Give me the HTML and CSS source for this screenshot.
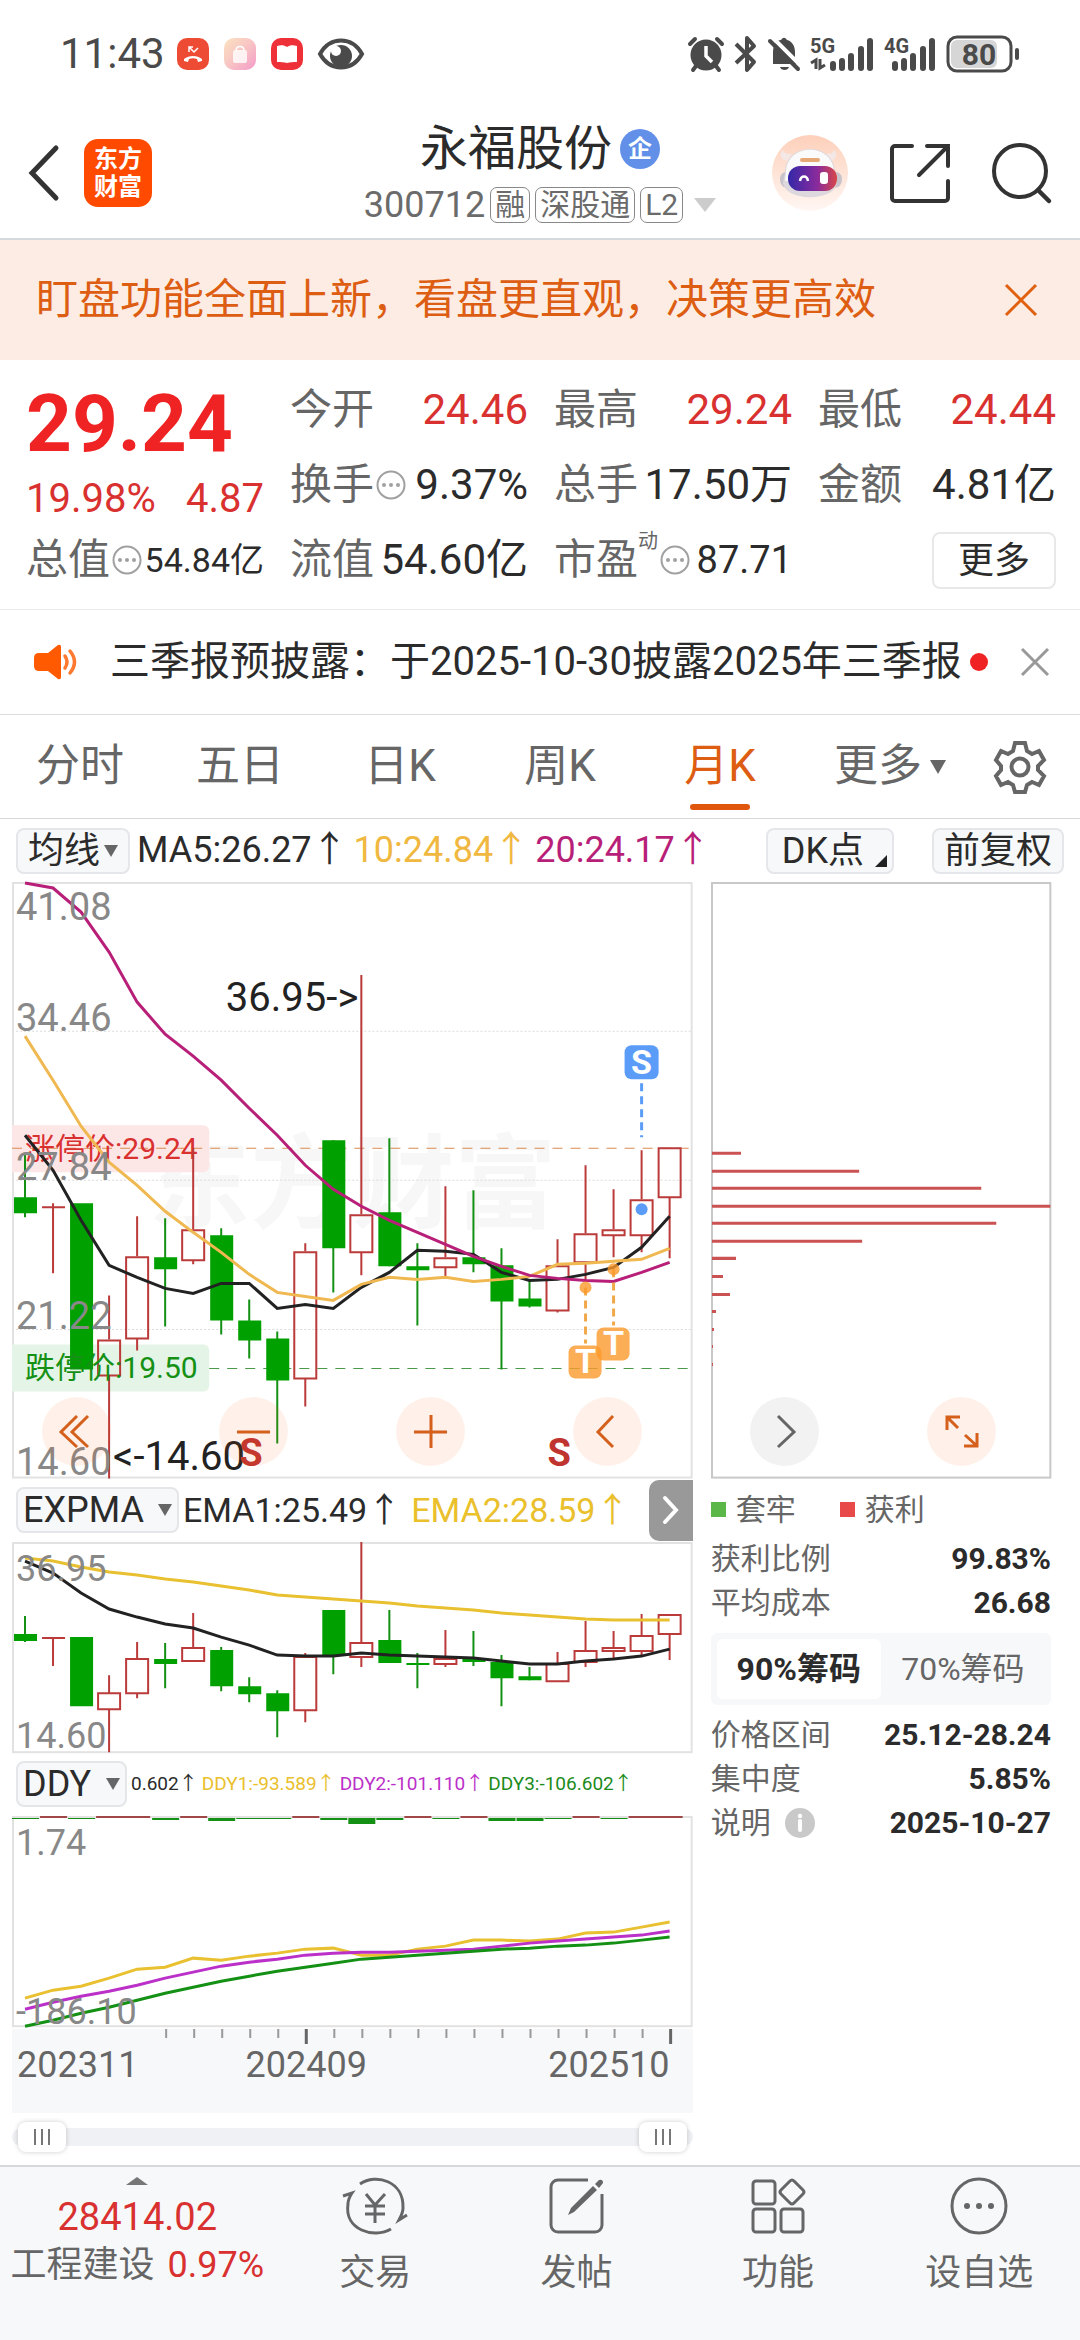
FILE: index.html
```html
<!DOCTYPE html>
<html lang="zh-CN">
<head>
    <meta charset="UTF-8">
    <meta name="viewport" content="width=device-width, initial-scale=1.0">
    <title>永福股份 300712</title>
    <link rel="stylesheet" href="styles.css">
</head>
<body>

    <div class="status">
        <span class="time">11:43</span>
        <svg class="app" width="32" height="32" viewBox="0 0 32 32"><rect width="32" height="32" rx="10" fill="#ee4b35"/><path d="M7 23v-2c5-4 13-4 18 0v2l-4 1-1-3c-3-1-5-1-8 0l-1 3z" fill="#fff"/><path d="M12 14V9h4M12 9l5 5 4-4" fill="none" stroke="#fff" stroke-width="1.5"/></svg>
        <svg class="app" width="32" height="32" viewBox="0 0 32 32"><defs><linearGradient id="bag" x1="0" y1="0" x2="1" y2="1"><stop offset="0" stop-color="#fbe3c0"/><stop offset=".5" stop-color="#f8c4c4"/><stop offset="1" stop-color="#f49ac8"/></linearGradient></defs><rect width="32" height="32" rx="10" fill="url(#bag)"/><rect x="9" y="12" width="14" height="13" rx="2" fill="#fff" opacity=".8"/><path d="M12 13c0-6 8-6 8 0" fill="none" stroke="#fff" stroke-width="1.5"/></svg>
        <svg class="app" width="32" height="32" viewBox="0 0 32 32"><rect width="32" height="32" rx="10" fill="#ee3039"/><path d="M6 8c4-1 7-1 10 1 3-2 6-2 10-1v16c-4 0-7 0-10 1-3-1-6-1-10-1z" fill="#fff"/></svg>
        <svg width="46" height="32" viewBox="0 0 46 32"><path d="M2 16C12-2 34-2 44 16 34 34 12 34 2 16z" fill="none" stroke="#4a4a4a" stroke-width="4"/><circle cx="23" cy="18" r="11" fill="#4a4a4a"/><circle cx="18" cy="13" r="5" fill="#fff"/></svg>
        <span class="grow"></span>
        <svg width="36" height="36" viewBox="0 0 36 36"><g stroke="#4a4a4a" stroke-width="4" stroke-linecap="round"><path d="M2 8l5-5M34 8l-5-5M8 30l-3 4M28 30l3 4"/></g><circle cx="18" cy="19" r="15.500" fill="#4a4a4a"/><path d="M18 10v10l6 6" fill="none" stroke="#fff" stroke-width="3.500"/></svg>
        <svg width="24" height="36" viewBox="0 0 24 36"><path d="M2 8l18 18-7 8V2l7 8L2 27" fill="none" stroke="#4a4a4a" stroke-width="4" stroke-linejoin="round"/></svg>
        <svg width="32" height="36" viewBox="0 0 32 36"><path d="M5 28V17C5 8 9 4 13 4c2-3 4-3 6 0 5 1 8 6 8 12v7l3 5zM12 31h9c-1 4-8 4-9 0z" fill="#4a4a4a"/><path d="M4 1l28 28" stroke="#fff" stroke-width="4"/><path d="M2 5l28 28" stroke="#4a4a4a" stroke-width="4" stroke-linecap="round"/></svg>
        <svg width="64" height="36" viewBox="0 0 64 36"><text class="net" x="0" y="17">5G</text><path d="M1 27l5-3v9M10 23v9l5-3" fill="none" stroke="#4a4a4a" stroke-width="3"/><path class="bars" d="M23 28v4M32 25v7M41 20v12M51 13v19M60 5v27"/></svg>
        <svg width="52" height="36" viewBox="0 0 52 36"><text class="net" x="0" y="17">4G</text><path class="bars" d="M11 28v4M20 25v7M29 20v12M39 13v19M48 5v27"/></svg>
        <svg width="74" height="38" viewBox="0 0 74 38"><rect x="5" y="5" width="46" height="28" rx="6" fill="#d6d6d6"/><rect x="2" y="2" width="63" height="34" rx="9" fill="none" stroke="#4a4a4a" stroke-width="3"/><rect x="69" y="13" width="4" height="12" rx="2" fill="#4a4a4a"/><text class="charge" x="33" y="30" text-anchor="middle">80</text></svg>
    </div>

    <header class="header">
        <div class="header-side">
            <button class="bare" aria-label="返回"><svg width="32" height="56" viewBox="0 0 32 56"><path d="M28 3L4 28l24 25" fill="none" stroke="#333" stroke-width="5" stroke-linecap="round"/></svg></button>
            <a class="logo" href="#">东方<br>财富</a>
        </div>
        <div class="title">
            <h1>永福股份<span class="corp">企</span></h1>
            <div class="code">300712 <span class="tag">融</span><span class="tag">深股通</span><span class="tag">L2</span><svg width="22" height="14" viewBox="0 0 22 14"><path d="M0 0h22L11 14z" fill="#ccc"/></svg></div>
        </div>
        <div class="header-side end">
            <button class="bare" aria-label="助手">
                <svg width="76" height="76" viewBox="0 0 76 76">
                    <defs>
                        <linearGradient id="halo" x1="0" y1="0" x2="0" y2="1"><stop offset="0" stop-color="#fdd0ba"/><stop offset="1" stop-color="#fff7f3"/></linearGradient>
                        <linearGradient id="visor"><stop offset="0" stop-color="#3428a8"/><stop offset=".6" stop-color="#8a2b9c"/><stop offset="1" stop-color="#d84848"/></linearGradient>
                    </defs>
                    <circle cx="38" cy="38" r="38" fill="url(#halo)"/>
                    <path d="M15 26c-7-2-8-7-4-11 1 4 5 4 9 4zM58 26c7-2 8-7 4-11-1 4-5 4-9 4z" fill="#f4e8e6"/>
                    <path d="M8 44c0-6 5-8 8-6v14c-4 2-8-2-8-8zM70 44c0-6-5-8-8-6v14c4 2 8-2 8-8z" fill="#c9c4cb"/>
                    <path d="M13 38c0-32 50-32 50 0l2 10c-3 19-51 19-54 0z" fill="#dcd8de"/>
                    <path d="M14 38c0-31 48-31 48 0l1 8H13z" fill="#fafafa"/>
                    <rect x="28" y="23" width="20" height="4" rx="2" fill="#e7a878"/>
                    <rect x="16" y="31" width="49" height="25" rx="12" fill="url(#visor)"/>
                    <path d="M28 46c1-6 7-6 8 0" fill="none" stroke="#fff" stroke-width="2.500"/>
                    <rect x="48" y="37" width="8" height="12" rx="3" fill="#fff"/>
                </svg>
            </button>
            <button class="bare" aria-label="分享"><svg width="60" height="60" viewBox="0 0 60 60"><g fill="none" stroke="#333" stroke-width="4" stroke-linecap="round"><path d="M22 3H5a3 3 0 00-3 3v49a3 3 0 003 3h50a3 3 0 003-3V38M37 3h21v20M58 3L29 32"/></g></svg></button>
            <button class="bare" aria-label="搜索"><svg width="60" height="60" viewBox="0 0 60 60"><circle cx="28" cy="28" r="26" fill="none" stroke="#333" stroke-width="4"/><path d="M46 47l11 11" stroke="#333" stroke-width="4.500" stroke-linecap="round"/></svg></button>
        </div>
    </header>

    <div class="banner">
        <span>盯盘功能全面上新，看盘更直观，决策更高效</span>
        <button class="bare" aria-label="关闭"><svg width="34" height="34" viewBox="0 0 34 34"><path d="M2 2l30 30M32 2L2 32" stroke="#e0600f" stroke-width="3"/></svg></button>
    </div>

    <section class="quote">
        <div class="price">
            <div class="last">29.24</div>
            <div class="change"><span>19.98%</span><span>4.87</span></div>
        </div>
        <div class="cell"><span class="name">今开</span><span class="up">24.46</span></div>
        <div class="cell"><span class="name">最高</span><span class="up">29.24</span></div>
        <div class="cell"><span class="name">最低</span><span class="up">24.44</span></div>
        <div class="cell"><span class="name">换手<svg class="dots" viewBox="0 0 30 30"><use href="#dots"/></svg></span><span>9.37%</span></div>
        <div class="cell"><span class="name">总手</span><span>17.50万</span></div>
        <div class="cell"><span class="name">金额</span><span>4.81亿</span></div>
        <div class="cell"><span class="name">总值<svg class="dots" viewBox="0 0 30 30"><use href="#dots"/></svg></span><span class="small">54.84亿</span></div>
        <div class="cell"><span class="name">流值</span><span>54.60亿</span></div>
        <div class="cell"><span class="name">市盈<sup>动</sup><svg class="dots" viewBox="0 0 30 30"><use href="#dots"/></svg></span><span class="mid">87.71</span></div>
        <div class="cell"><button class="more">更多</button></div>
        <svg width="0" height="0" class="symbols"><symbol id="dots" viewBox="0 0 30 30"><circle cx="15" cy="15" r="13.500" fill="none" stroke="#a0a0a0" stroke-width="2"/><g fill="#a0a0a0"><circle cx="8" cy="15" r="2"/><circle cx="15" cy="15" r="2"/><circle cx="22" cy="15" r="2"/></g></symbol></svg>
    </section>

    <div class="notice">
        <svg width="44" height="36" viewBox="0 0 44 36"><path d="M5 9h9L24 1q3-1 3 2v30q0 3-3 2l-10-8H5q-5 0-5-5v-8q0-5 5-5z" fill="#ff5a00"/><path d="M31 12q4 6 0 12M36 7q9 11 0 22" fill="none" stroke="#ff7a30" stroke-width="3.500" stroke-linecap="round"/></svg>
        <a href="#">三季报预披露：于2025-10-30披露2025年三季报</a>
        <i class="red-dot"></i>
        <button class="bare" aria-label="关闭"><svg width="30" height="30" viewBox="0 0 30 30"><path d="M2 2l26 26M28 2L2 28" stroke="#999" stroke-width="3"/></svg></button>
    </div>

    <nav class="tabs">
        <button>分时</button>
        <button>五日</button>
        <button>日K</button>
        <button>周K</button>
        <button class="active">月K</button>
        <button>更多<svg width="16" height="14" viewBox="0 0 16 14"><path d="M0 0h16L8 14z" fill="#666"/></svg></button>
        <button aria-label="设置"><svg width="52" height="54" viewBox="0 0 52 54"><path d="M21 3h10l2 8 5 3 7-3 5 9-6 6v4l6 6-5 9-7-3-5 3-2 7H21l-2-7-5-3-7 3-5-9 5-6v-4l-5-6 5-9 7 3 5-3z" fill="none" stroke="#666" stroke-width="4"/><circle cx="26" cy="27" r="8.500" fill="none" stroke="#666" stroke-width="4"/></svg></button>
    </nav>

    <div class="legend-row top">
        <label class="pill"><select aria-label="主图指标"><option>均线</option></select></label>
        <span class="ma"><span>MA5:26.27↑</span><span class="yellow">10:24.84↑</span><span class="magenta">20:24.17↑</span></span>
        <button class="pill dk">DK点</button>
        <button class="pill">前复权</button>
    </div>

    <main class="charts">
        <div class="left">
            <!-- monthly candles, one every 28 units starting at x=13 -->
            <svg class="chart" viewBox="0 0 680 596">
                <rect class="frame" x="1" y="1" width="678" height="594"/>
                <text class="watermark" x="136" y="338">东方财富</text>
                <path class="grid" d="M0 149h680M0 298h680M0 447h680"/>
                <path class="limit-tag-up" d="M0 243h191a6 6 0 016 6v35a6 6 0 01-6 6H0z"/>
                <path class="limit-tag-down" d="M0 462h191a6 6 0 016 6v35a6 6 0 01-6 6H0z"/>
                <path class="limit-up" d="M0 266h677"/>
                <path class="limit-down" d="M197 486h480"/>
                <text class="tag-up" x="13" y="277">涨停价:29.24</text>
                <g class="down-candle">
                    <path d="M13 271v64M153 336v108M209 346v106M237 417v59M265 449v112M321 258v152M377 256v128M405 361v82M461 308v82M489 366v121M517 397v28"/>
                    <path class="body" d="M2 315h23v16H2zM58 321h23v166H58zM142 375h23v12h-23zM198 353h23v85h-23zM226 438h23v20h-23zM254 456h23v42h-23zM310 258h23v108h-23zM366 330h23v54h-23zM394 384h23v4h-23zM450 375h23v7h-23zM478 383h23v36h-23zM506 416h23v8h-23z"/>
                </g>
                <g class="up-candle">
                    <path d="M41 321v70M30 325h23M97 413v44M97 493v103M125 334v40M125 456v12M181 266v81M181 378v4M293 361v8M293 496v28"/>
                    <path d="M349 93v239M349 370v23M433 304v71M433 385v9M545 357v26M545 428v2M573 283v68M573 380v18M601 307v40M601 353v22M629 268v49M629 353v17M657 315v61"/>
                    <path d="M86 458h22v35H86zM114 375h22v81h-22zM170 348h22v30h-22zM282 370h22v126h-22zM338 333h22v37h-22zM422 376h22v9h-22zM534 384h22v44h-22zM562 352h22v28h-22zM590 348h22v5h-22zM618 318h22v35h-22zM646 266h22v49h-22z"/>
                </g>
                <text class="tag-down" x="13" y="496">跌停价:19.50</text>
                <polyline class="line black" points="13,253 41,288 69,338 97,383 125,395 153,406 181,411 209,401 237,401 265,426 293,422 321,426 349,405 377,390 405,368 433,369 461,372 489,390 517,398 545,397 573,392 601,385 629,365 657,334"/>
                <polyline class="line orange" points="13,154 41,198 69,244 97,280 125,303 153,329 181,350 209,370 237,392 265,410 293,414 321,418 349,402 377,395 405,397 433,395 461,399 489,397 517,394 545,382 573,381 601,379 629,377 657,366"/>
                <polyline class="line purple" points="13,1 41,6 69,30 97,70 125,120 153,152 181,174 209,198 237,226 265,253 293,283 321,307 349,324 377,338 405,350 433,362 461,374 489,384 517,393 545,396 573,398 601,399 629,390 657,380"/>
                <g class="axis">
                    <text x="4" y="38">41.08</text>
                    <text x="4" y="149">34.46</text>
                    <text x="4" y="298">27.84</text>
                    <text x="4" y="447">21.22</text>
                    <text x="4" y="592">14.60</text>
                </g>
                <text class="extreme" x="346" y="129" text-anchor="end">36.95-&gt;</text>
                <text class="extreme" x="101" y="587">&lt;-14.60</text>
                <text class="split" x="227" y="583">S</text>
                <text class="split" x="535" y="583">S</text>
                <path class="blue-dash" d="M629 201v54"/>
                <circle cx="629" cy="327" r="6" fill="#5a9cf8"/>
                <rect x="612" y="163" width="34" height="34" rx="7" fill="#5a9cf8"/>
                <text class="badge" x="629" y="192" text-anchor="middle">S</text>
                <path class="orange-dash" d="M573 405v56M601 387v56"/>
                <g fill="#fb9a2c" fill-opacity=".8">
                    <circle cx="573" cy="405" r="6"/><circle cx="601" cy="387" r="6"/>
                    <rect x="556" y="463" width="33" height="33" rx="7"/><rect x="584" y="445" width="33" height="33" rx="7"/>
                </g>
                <text class="badge" x="573" y="491" text-anchor="middle">T</text>
                <text class="badge" x="601" y="473" text-anchor="middle">T</text>
            </svg>

            <div class="legend-row">
                <label class="pill wide"><select aria-label="副图指标一"><option>EXPMA</option></select></label>
                <span class="ema"><span>EMA1:25.49↑</span><span class="gold">EMA2:28.59↑</span></span>
                <button class="next" aria-label="展开"><svg width="20" height="30" viewBox="0 0 20 30"><path d="M4 3l11 12L4 27" fill="none" stroke="#fff" stroke-width="4" stroke-linecap="round"/></svg></button>
            </div>
            <svg class="chart" viewBox="0 0 680 211">
                <rect class="frame" x="1" y="1" width="678" height="209"/>
                <g class="down-candle">
                    <path d="M13 74v26M153 101v45M209 105v44M237 135v25M265 148v47M321 68v64M377 68v53M405 111v35M461 89v35M489 113v51M517 125v13"/>
                    <path class="body" d="M2 92h23v7H2zM58 95h23v69H58zM142 117h23v5h-23zM198 108h23v36h-23zM226 144h23v8h-23zM254 151h23v18h-23zM310 68h23v46h-23zM366 98h23v23h-23zM394 121h23v2h-23zM450 116h23v4h-23zM478 120h23v16h-23zM506 134h23v4h-23z"/>
                </g>
                <g class="up-candle">
                    <path d="M41 96v28M30 96h23M97 133v18M97 167v43M125 100v16M125 151v5M181 71v34M293 111v3M293 168v12M349 0v100M349 115v10M433 88v28M433 122v3M545 110v11M573 79v29M573 120v5M601 89v16M601 109v8M629 72v21M629 109v5M657 92v26"/>
                    <path d="M86 151h22v16H86zM114 117h22v34h-22zM170 106h22v13h-22zM282 115h22v53h-22zM338 101h22v14h-22zM422 117h22v5h-22zM534 122h22v17h-22zM562 109h22v11h-22zM590 106h22v3h-22zM618 94h22v15h-22zM646 73h22v19h-22z"/>
                </g>
                <polyline class="line gold-line" points="13,16 41,19 69,25 97,30 125,33 153,37 181,40 209,44 237,48 265,53 293,55 321,57 349,59 377,61 405,64 433,66 461,68 489,71 517,73 545,75 573,77 601,78 629,78 657,78"/>
                <polyline class="line black" points="13,19 41,31 69,51 97,67 125,75 153,82 181,86 209,95 237,103 265,113 293,114 321,114 349,111 377,113 405,114 433,115 461,116 489,119 517,122 545,122 573,119 601,117 629,114 657,107"/>
                <g class="axis sub">
                    <text x="4" y="39">36.95</text>
                    <text x="4" y="206">14.60</text>
                </g>
            </svg>

            <div class="legend-row">
                <label class="pill wide"><select aria-label="副图指标二"><option>DDY</option></select></label>
                <span class="ddy"><span>0.602↑</span><span class="gold">DDY1:-93.589↑</span><span class="violet">DDY2:-101.110↑</span><span class="green">DDY3:-106.602↑</span></span>
            </div>
            <svg class="chart" viewBox="0 0 680 211">
                <rect class="frame" x="1" y="1" width="678" height="209"/>
                <path d="M28 1h27M84 1h54M168 1h27M280 1h27M392 1h27M448 1h27M560 1h27M616 1h54" stroke="#a04848" stroke-width="2"/>
                <path fill="#149014" d="M0 2h27v1H0zM56 2h27v1H56zM140 2h27v2h-27zM196 2h27v3h-27zM224 2h55v1h-55zM308 2h27v2h-27zM336 2h27v6h-27zM364 2h27v2h-27zM420 2h27v1h-27zM476 2h27v3h-27zM504 2h27v3h-27zM532 2h27v1h-27zM588 2h27v1h-27z"/>
                <polyline class="line gold-line" points="13,182 41,174 69,170 97,162 125,153 153,151 181,142 209,144 237,140 265,137 293,133 321,132 349,139 377,139 405,133 433,130 461,124 489,124 517,125 545,123 573,117 601,116 629,111 657,106"/>
                <polyline class="line violet-line" points="13,193 41,186 69,180 97,175 125,169 153,162 181,156 209,150 237,146 265,143 293,139 321,137 349,136 377,136 405,135 433,134 461,133 489,130 517,127 545,125 573,123 601,121 629,119 657,115"/>
                <polyline class="line green-line" points="13,210 41,204 69,197 97,191 125,184 153,177 181,171 209,165 237,160 265,155 293,151 321,147 349,143 377,141 405,139 433,137 461,135 489,133 517,132 545,130 573,129 601,127 629,124 657,121"/>
                <g class="axis sub">
                    <text x="4" y="39">1.74</text>
                    <text x="4" y="208">-186.10</text>
                </g>
            </svg>

            <svg class="chart dates" viewBox="0 0 680 84">
                <path d="M154 0v9M182 0v9M210 0v9M238 0v9M266 0v9M322 0v9M350 0v9M378 0v9M406 0v9M434 0v9M462 0v9M490 0v9M518 0v9M546 0v9M574 0v9M602 0v9M630 0v9" stroke="#999" stroke-width="2"/>
                <path d="M294 0v15M658 0v15" stroke="#666" stroke-width="3"/>
                <text x="5" y="48">202311</text>
                <text x="294" y="48" text-anchor="middle">202409</text>
                <text x="657" y="48" text-anchor="end">202510</text>
            </svg>

            <div class="range">
                <input type="range" min="0" max="23" value="0" aria-label="开始月份">
                <input type="range" min="0" max="23" value="23" aria-label="结束月份">
            </div>
        </div>

        <div class="right">
            <svg class="chart" viewBox="0 0 340 596">
                <rect class="frame dark" x="1" y="1" width="338" height="594"/>
                <path d="M1 271h29M1 289h147M1 306h269M1 324h338M1 341h284M1 359h150M1 376h24M1 394h11M1 412h18M1 429h4M1 447h2M1 464h1M1 482h1" stroke="#cb5252" stroke-width="3"/>
            </svg>
            <div class="chips-legend"><span class="lost">套牢</span><span class="won">获利</span></div>
            <dl>
                <div><dt>获利比例</dt><dd>99.83%</dd></div>
                <div><dt>平均成本</dt><dd>26.68</dd></div>
            </dl>
            <div class="switch"><button class="on">90%筹码</button><button>70%筹码</button></div>
            <dl>
                <div><dt>价格区间</dt><dd>25.12-28.24</dd></div>
                <div><dt>集中度</dt><dd>5.85%</dd></div>
                <div><dt>说明 <svg width="30" height="30" viewBox="0 0 30 30"><circle cx="15" cy="15" r="15" fill="#c9c9c9"/><circle cx="15" cy="8" r="2.200" fill="#fff"/><path d="M15 13v9" stroke="#fff" stroke-width="4" stroke-linecap="round"/></svg></dt><dd>2025-10-27</dd></div>
            </dl>
        </div>

        <div class="tools">
            <button aria-label="最早"><svg viewBox="0 0 69 69"><path d="M35 19L19 35l16 15M46 19L30 35l16 15"/></svg></button>
            <button aria-label="缩小"><svg viewBox="0 0 69 69"><path d="M18 35h33"/></svg></button>
            <button aria-label="放大"><svg viewBox="0 0 69 69"><path d="M18 35h33M35 18v33"/></svg></button>
            <button aria-label="向左"><svg viewBox="0 0 69 69"><path d="M40 19L25 35l15 15"/></svg></button>
            <button class="gray" aria-label="向右"><svg viewBox="0 0 69 69"><path d="M28 19l16 16-16 15"/></svg></button>
            <button aria-label="全屏"><svg viewBox="0 0 69 69"><path d="M20 33V20h13M20 20l11 11M50 36v13H37M50 49L38 38"/></svg></button>
        </div>
    </main>

    <footer class="bottom">
        <a class="index" href="#">
            <svg width="22" height="8" viewBox="0 0 22 8"><path d="M0 8L11 0l11 8z" fill="#777"/></svg>
            <strong>28414.02</strong>
            <span>工程建设 <em>0.97%</em></span>
        </a>
        <a href="#"><svg width="66" height="58" viewBox="0 0 66 58"><g fill="none" stroke="#666" stroke-width="3"><path d="M18 7C34-4 62 4 61 31c0 5-2 8-4 12l8-5M49 52C32 62 2 53 6 27c0-4 2-8 4-11L1 19"/><path d="M24 17l9 11 10-11M33 28v18M23 29h20M23 37h20"/></g></svg>交易</a>
        <a href="#"><svg width="56" height="58" viewBox="0 0 56 58"><path d="M39 3H9a7 7 0 00-7 7v38a7 7 0 007 7h37a7 7 0 007-7V17" fill="none" stroke="#666" stroke-width="3"/><path d="M19 38l3-7 22-22 4 4-23 22zM46 7l4-4q4-1 4 3l-4 5z" fill="#666"/></svg>发帖</a>
        <a href="#"><svg width="56" height="58" viewBox="0 0 56 58"><g fill="none" stroke="#666" stroke-width="3"><rect x="3" y="4" width="22" height="23" rx="3"/><rect x="3" y="32" width="22" height="23" rx="3"/><rect x="31" y="32" width="22" height="23" rx="3"/><path d="M40 4q2-2 4 0l9 9q2 2 0 4l-9 9q-2 2-4 0l-9-9q-2-2 0-4z"/></g></svg>功能</a>
        <a href="#"><svg width="58" height="58" viewBox="0 0 58 58"><circle cx="29" cy="29" r="27" fill="none" stroke="#666" stroke-width="3"/><g fill="#666"><circle cx="17" cy="29" r="3"/><circle cx="29" cy="29" r="3"/><circle cx="41" cy="29" r="3"/></g></svg>设自选</a>
    </footer>

</body>
</html>
```

FILE: styles.css
```css
* { box-sizing: border-box; }
body { margin: 0; min-height: 100vh; display: flex; flex-direction: column; background: #fff; color: #2b2b2b; font-family: Roboto, "Noto Sans CJK SC", sans-serif; font-size: 36px; line-height: 1.2; }
svg { display: block; flex: none; overflow: visible; }
a { color: inherit; text-decoration: none; }
button, select { font: inherit; color: inherit; padding: 0; border: 0; background: none; cursor: pointer; }
.bare { line-height: 0; }
.grow { flex: 1; }

.status { display: flex; align-items: center; gap: 10px; height: 108px; padding: 0 60px; color: #4a4a4a; }
.time { margin-right: 2px; font-size: 42px; }
.app { margin-right: 5px; }
.net { font-size: 20px; font-weight: 700; fill: #4a4a4a; }
.bars { stroke: #4a4a4a; stroke-width: 6; stroke-linecap: round; }
.charge { font-size: 30px; font-weight: 700; fill: #4a4a4a; }

.header { display: grid; grid-template-columns: 1fr auto 1fr; align-items: center; height: 132px; padding: 0 28px; border-bottom: 2px solid #d5d9dc; }
.header-side { display: flex; align-items: center; gap: 24px; }
.end { justify-content: flex-end; gap: 42px; }
.logo { width: 68px; padding: 6px 0; border-radius: 14px; background: #ff4a00; color: #fff; font-size: 24px; font-weight: 700; line-height: 28px; text-align: center; }
.title { text-align: center; }
h1 { display: flex; align-items: center; justify-content: center; gap: 8px; margin: 0 0 8px; font-size: 48px; font-weight: 400; line-height: 56px; }
.corp { width: 40px; height: 40px; border-radius: 50%; background: #6290e8; color: #fff; font-size: 24px; font-weight: 700; line-height: 40px; }
.code { display: flex; align-items: center; justify-content: center; gap: 5px; color: #6b6b6b; line-height: 40px; }
.tag { padding: 0 4px; border: 1px solid #888; border-radius: 7px; font-size: 30px; line-height: 34px; }
.code svg { margin-left: 6px; }

.banner { display: flex; align-items: center; justify-content: space-between; height: 120px; padding: 0 42px 0 36px; background: #fcece3; color: #dd5d12; font-size: 42px; }

.quote { display: grid; grid-template-columns: repeat(4, 1fr); grid-auto-rows: 75px; column-gap: 26px; padding: 13px 24px 11px 26px; border-bottom: 1px solid #eaeaea; font-size: 42px; }
.price { grid-row: span 2; color: #ef2323; }
.last { font-size: 80px; font-weight: 700; line-height: 102px; }
.change { display: flex; justify-content: space-between; color: #d93030; font-size: 40px; line-height: 48px; }
.cell { display: flex; align-items: center; justify-content: space-between; white-space: nowrap; }
.name { display: flex; align-items: center; color: #666; }
.name sup { align-self: flex-start; font-size: 20px; line-height: 12px; }
.dots { width: 30px; height: 30px; margin-left: 2px; }
.up { color: #d93030; }
.small { font-size: 34px; }
.mid { font-size: 38px; }
.more { width: 124px; height: 57px; margin-left: auto; border: 2px solid #e8e8e8; border-radius: 8px; font-size: 36px; line-height: 52px; }
.symbols { position: absolute; }

.notice { display: flex; align-items: center; height: 105px; padding: 0 30px 0 34px; border-bottom: 1px solid #ddd; font-size: 40px; white-space: nowrap; }
.notice a { margin-left: 32px; }
.notice .bare { margin-left: auto; }
.red-dot { width: 18px; height: 18px; margin-left: 8px; border-radius: 50%; background: #ef2323; }

.tabs { display: grid; grid-template-columns: repeat(5, 16fr) 18fr 8fr; height: 104px; padding-right: 20px; border-bottom: 1px solid #d8d8d8; color: #666; font-size: 44px; }
.tabs button { position: relative; display: flex; align-items: center; justify-content: center; gap: 8px; }
.tabs .active { color: #dd5d12; }
.tabs .active::after { content: ""; position: absolute; bottom: 8px; width: 60px; height: 6px; border-radius: 3px; background: #e0560c; }

.legend-row { display: flex; align-items: center; height: 63px; white-space: nowrap; }
.top { padding: 0 16px; }
.pill { position: relative; display: inline-flex; align-items: center; height: 46px; padding: 0 10px; border: 2px solid #e4e6ea; border-radius: 8px; background: #f7f8fa; line-height: 40px; }
.pill select { appearance: none; outline: none; }
label.pill::after { content: ""; border: 7px solid transparent; border-top: 12px solid #666; border-bottom: 0; margin-left: 3px; }
.wide { padding: 0 5px; margin-left: 4px; }
label.wide::after { margin-left: 14px; }
.dk { margin-right: 38px; padding: 0 28px 0 14px; }
.dk::after { content: ""; position: absolute; right: 5px; bottom: 5px; border: 6px solid #222; border-top-color: transparent; border-left-color: transparent; }
.ma { flex: 1; display: flex; gap: 6px; padding-left: 7px; }
.ema { flex: 1; display: flex; gap: 10px; padding-left: 4px; font-size: 34px; }
.ddy { display: flex; gap: 4px; padding-left: 4px; font-size: 19px; }
.yellow { color: #f0b840; }
.magenta { color: #b81f78; }
.gold { color: #eac02c; }
.violet { color: #bb30c8; }
.green { color: #1c8c1c; }
.next { display: grid; place-items: center; align-self: stretch; width: 44px; margin: 1px 0; border-radius: 10px 0 0 10px; background: #999; }

.charts { position: relative; display: grid; grid-template-columns: 2fr 1fr; column-gap: 18px; padding: 0 29px 13px 12px; }
.chart { width: 100%; height: auto; }
.frame { fill: none; stroke: #e2e2e2; stroke-width: 2; }
.dark { stroke: #c8c8c8; }
.grid { stroke: #dcdcdc; stroke-dasharray: 2 2; }
.watermark { font-size: 102px; font-weight: 700; fill: #f7f7f7; }
.limit-tag-up { fill: #fde6e6; }
.limit-tag-down { fill: #e4f4e6; }
.limit-up { stroke: #d98a50; stroke-dasharray: 10 8; }
.limit-down { stroke: #4a9a4a; stroke-dasharray: 10 8; }
.tag-up { font-size: 30px; fill: #d93030; }
.tag-down { font-size: 30px; fill: #149014; }
.down-candle { fill: none; stroke: #149014; stroke-width: 2; }
.down-candle .body { fill: #00a000; stroke: none; }
.up-candle { fill: none; stroke: #bb3a3a; stroke-width: 2; }
.line { fill: none; stroke-width: 3; }
.black { stroke: #222; }
.orange { stroke: #f0b850; }
.purple { stroke: #b81f78; }
.gold-line { stroke: #e8c030; }
.violet-line { stroke: #bb30c8; }
.green-line { stroke: #149014; }
.axis { font-size: 38px; fill: #888; }
.sub { font-size: 36px; }
.extreme { font-size: 40px; fill: #222; }
.split { font-size: 38px; font-weight: 700; fill: #c03430; }
.badge { font-size: 34px; font-weight: 700; fill: #fff; }
.blue-dash { stroke: #5a9cf8; stroke-width: 3; stroke-dasharray: 8 5; }
.orange-dash { stroke: #f0a848; stroke-width: 3; stroke-dasharray: 8 5; }
.dates { margin-top: 2px; background: #f7f8fa; font-size: 36px; fill: #666; }

.range { position: relative; height: 30px; margin-top: 9px; padding: 6px 0; }
.range::before { content: ""; display: block; height: 18px; border-radius: 9px; background: #f0f1f4; }
.range input { position: absolute; top: 0; left: 6px; right: 6px; width: calc(100% - 12px); height: 30px; margin: 0; appearance: none; background: none; pointer-events: none; }
.range input::-webkit-slider-thumb { appearance: none; width: 48px; height: 30px; border-radius: 8px; background: linear-gradient(90deg, #777 2px, transparent 2px 7px, #777 7px 9px, transparent 9px 14px, #777 14px) center / 16px 16px no-repeat, #fff; box-shadow: 0 0 5px rgba(0, 0, 0, .2); pointer-events: auto; }

.right { font-size: 30px; }
.chips-legend { display: flex; gap: 44px; margin: 9px 0 5px; color: #666; line-height: 44px; }
.chips-legend span { display: flex; align-items: center; gap: 10px; }
.chips-legend span::before { content: ""; width: 15px; height: 15px; background: #5bb848; }
.chips-legend .won::before { background: #e84a4a; }
dl { margin: 0; line-height: 44px; }
dl div { display: flex; justify-content: space-between; }
dt { display: flex; align-items: center; gap: 14px; color: #666; }
dd { margin: 0; font-weight: 700; }
.switch { display: grid; grid-template-columns: 1fr 1fr; margin: 8px 0; padding: 6px; border-radius: 6px; background: #f7f8fa; color: #666; font-size: 32px; line-height: 60px; }
.switch .on { border-radius: 6px; background: #fff; color: #2b2b2b; font-weight: 700; }

/* round buttons lie over both upper charts */
.tools { position: absolute; top: 515px; left: 42px; right: 84px; display: flex; justify-content: space-between; pointer-events: none; }
.tools button { width: 69px; height: 69px; border-radius: 50%; background: rgba(255, 96, 20, .09); pointer-events: auto; }
.tools svg { fill: none; stroke: #d4601c; stroke-width: 3; }
.tools .gray { background: #f2f2f2; }
.tools .gray svg { stroke: #666; }

.bottom { flex: 1; display: grid; grid-template-columns: 15fr repeat(4, 11fr); border-top: 2px solid #d5d9dc; background: #f7f8fa; color: #666; }
.bottom a { display: flex; flex-direction: column; align-items: center; gap: 14px; padding-top: 10px; line-height: 48px; }
.bottom .index { gap: 0; }
.index strong { margin-top: 8px; color: #d93030; font-size: 38px; font-weight: 400; }
.index em { margin-left: 4px; color: #d93030; font-style: normal; }
```
